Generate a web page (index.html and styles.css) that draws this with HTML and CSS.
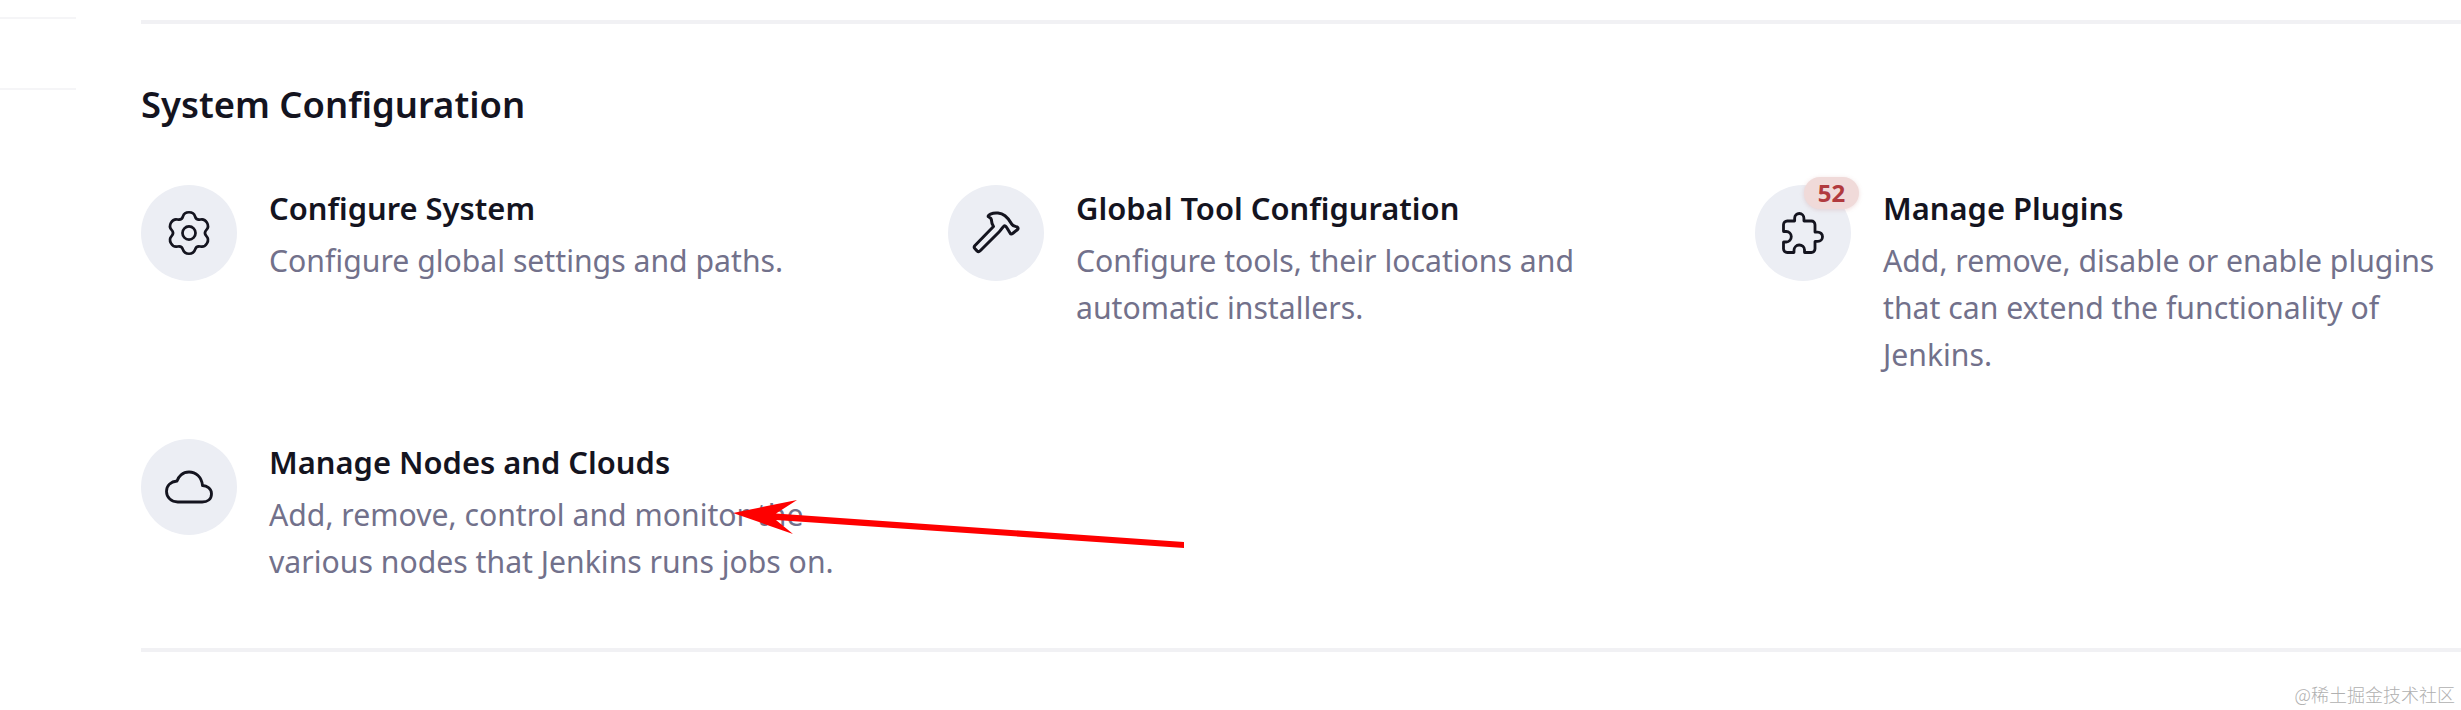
FILE: index.html
```html
<!DOCTYPE html>
<html>

<head>
    <meta name="viewport" content="width=device-width, initial-scale=1" />
    <link rel="stylesheet" href="styles.css">
</head>

<body>
    <aside class="side">
        <span class="side-line"></span>
        <span class="side-line"></span>
    </aside>
    <main class="content">
        <section class="section">
            <h2 class="section-title">System Configuration</h2>
            <div class="grid">
                <div class="item">
                    <span class="icon">
                        <svg viewBox="-26.5 -26.5 53 53" width="48" height="48">
                            <path d="M0-22.9Q5.29-22.9 6.65-18.38Q8-13.86 12.6-14.95Q17.19-16.03 19.83-11.45Q22.47-6.87 19.24-3.44Q16 0 19.24 3.44Q22.47 6.87 19.83 11.45Q17.19 16.03 12.6 14.95Q8 13.86 6.65 18.38Q5.29 22.9 0 22.9Q-5.29 22.9-6.65 18.38Q-8 13.86-12.6 14.95Q-17.19 16.03-19.83 11.45Q-22.47 6.87-19.24 3.44Q-16 0-19.24-3.44Q-22.47-6.87-19.83-11.45Q-17.19-16.03-12.6-14.95Q-8-13.86-6.65-18.38Q-5.29-22.9 0-22.9Z" />
                            <circle cx="0" cy="0" r="7.2" />
                        </svg>
                    </span>
                    <div class="text">
                        <div class="name">Configure System</div>
                        <div class="desc">Configure global settings and paths.</div>
                    </div>
                </div>
                <div class="item">
                    <span class="icon">
                        <svg viewBox="0 0 48 48" width="48" height="48">
                            <path d="M21.5 17.5L3 36.5Q1.4 38.2 3 39.8L5 41.9Q6.6 43.4 8.2 41.8L27.3 22.7C29 20.5 30 19 31.8 17.2C33 16 34 17.5 35 19L38.2 24.3Q39.2 25.8 40.6 24.5L45.6 20.5Q46.8 19.2 45.2 18.1C43.5 17.2 41.5 17.4 40 15.5C38 12.5 36.5 9.5 33 6.8C29 3.8 23 3 18.5 5.2C16.5 6.2 15.6 7.3 16.5 7.8C18.5 8.5 19.6 9.8 19.6 12C19.6 14 20.5 16 21.5 17.5Z" />
                        </svg>
                    </span>
                    <div class="text">
                        <div class="name">Global Tool Configuration</div>
                        <div class="desc">Configure tools, their locations and automatic installers.</div>
                    </div>
                </div>
                <div class="item">
                    <span class="icon">
                        <svg viewBox="0 0 512 512" width="48" height="48">
                            <path class="thick" d="M413.66 246.1H386a2 2 0 01-2-2v-77.24A38.86 38.86 0 00345.14 128H267.9a2 2 0 01-2-2V98.34c0-27.14-21.5-49.86-48.64-50.33a49.53 49.53 0 00-50.4 49.51V126a2 2 0 01-2 2H87.62A39.74 39.74 0 0048 167.62V238a2 2 0 002 2h26.91c29.37 0 53.68 25.48 54.09 54.85.42 29.87-23.51 57.15-53.29 57.15H50a2 2 0 00-2 2v70.38A39.74 39.74 0 0087.62 464H158a2 2 0 002-2v-20.93c0-30.28 24.75-56.35 55-57.06 30.1-.7 57 20.31 57 50.28V462a2 2 0 002 2h71.14A38.86 38.86 0 00384 425.14v-78a2 2 0 012-2h28.48c27.63 0 49.52-22.67 49.52-50.4s-23.2-48.64-50.34-48.64z" />
                        </svg>
                        <span class="badge">52</span>
                    </span>
                    <div class="text">
                        <div class="name">Manage Plugins</div>
                        <div class="desc">Add, remove, disable or enable plugins that can extend the functionality of Jenkins.</div>
                    </div>
                </div>
                <div class="item">
                    <span class="icon">
                        <svg viewBox="0 0 512 512" width="48" height="48">
                            <path class="thick" d="M400 240c-8.89-89.54-71-144-144-144-69 0-113.44 48.2-128 96C68 198 16 235.59 16 304c0 66 54 112 120 112h260c55 0 100-27.44 100-88 0-59.82-53-85.76-96-88z" />
                        </svg>
                    </span>
                    <div class="text">
                        <div class="name">Manage Nodes and Clouds</div>
                        <div class="desc">Add, remove, control and monitor the various nodes that Jenkins runs jobs on.</div>
                    </div>
                </div>
            </div>
        </section>
    </main>

    <!-- annotation drawn on top of the screenshot -->
    <svg class="arrow" viewBox="0 0 2461 710" width="2461" height="710">
        <polygon points="733,513 797,500 776,513.5 1184,542 1184,548 776,520 793,534" />
    </svg>
    <div class="watermark">@稀土掘金技术社区</div>
</body>

</html>
```

FILE: styles.css
```css
* {
    box-sizing: border-box;
}

body {
    margin: 0;
    width: 2461px;
    height: 710px;
    overflow: hidden;
    display: flex;
    background-color: #fff;
    font-family: "Noto Sans", "Open Sans", sans-serif;
    color: #14141f;
}

.side {
    flex: none;
    width: 76px;
    padding-top: 17px;
    display: flex;
    flex-direction: column;
    gap: 69px;
}

.side-line {
    height: 2px;
    background-color: #f5f5f7;
}

.content {
    flex: 1;
    margin-left: 65px;
    padding-top: 20px;
}

.section {
    border-top: 4px solid #f1f1f4;
    border-bottom: 4px solid #f1f1f4;
    height: 632px;
    padding-top: 56px;
}

.section-title {
    margin: 0 0 57px;
    font-size: 36.4px;
    line-height: 48px;
    font-weight: 600;
}

.grid {
    display: grid;
    grid-template-columns: repeat(3, 775px);
    grid-auto-rows: 222px;
    column-gap: 32px;
    row-gap: 32px;
}

.item {
    display: flex;
    gap: 32px;
}

.icon {
    position: relative;
    flex: none;
    width: 96px;
    height: 96px;
    border-radius: 50%;
    background-color: #eceef4;
    display: flex;
    align-items: center;
    justify-content: center;
}

.icon path,
.icon circle {
    fill: none;
    stroke: #14141f;
    stroke-width: 3;
    stroke-linejoin: round;
}

.icon path.thick {
    stroke-width: 30;
}

.badge {
    position: absolute;
    top: -8px;
    left: 49px;
    width: 55px;
    height: 32px;
    border-radius: 16px;
    background-color: #f0dad9;
    box-shadow: 0 1px 4px rgba(190, 120, 120, 0.25);
    color: #b13a3e;
    font-size: 24px;
    line-height: 32px;
    font-weight: 700;
    text-align: center;
}

.text {
    width: 590px;
    padding-top: 3px;
}

.name {
    font-size: 30.9px;
    line-height: 40px;
    font-weight: 600;
    margin-bottom: 9px;
}

.desc {
    font-size: 30.2px;
    line-height: 47px;
    color: #72718b;
}

.arrow {
    position: absolute;
    top: 0;
    left: 0;
}

.arrow polygon {
    fill: #fe0000;
}

.watermark {
    position: absolute;
    right: 6px;
    top: 682px;
    font-family: "Noto Sans CJK SC", sans-serif;
    font-size: 18px;
    line-height: 24px;
    font-weight: 300;
    color: #b0b0b0;
}
```
